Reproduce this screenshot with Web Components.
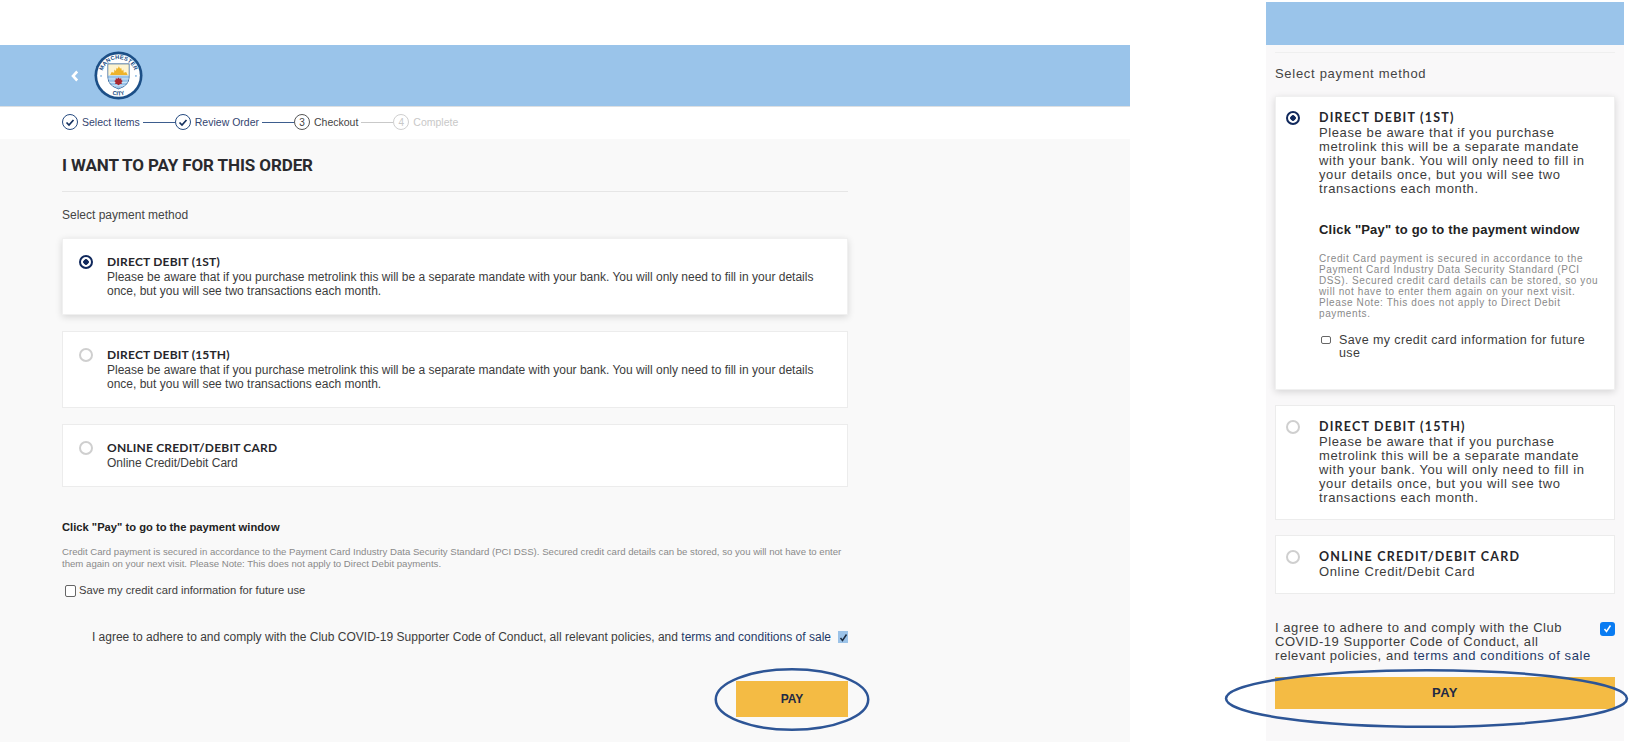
<!DOCTYPE html>
<html lang="en">
<head>
<meta charset="utf-8">
<title>Pay for this order</title>
<style>
  html, body { margin: 0; height: 742px; overflow: hidden; background: #fff; }
  body { display: flex; align-items: flex-start; font-family: "Liberation Sans", Arial, sans-serif; color: #3a3a3a; }
  .pane h1 {
    margin: 0;
    padding: 17px 0 17px;
    border-bottom: 1px solid #e6e6e6;
    font: 700 17px/18px Roboto, sans-serif;
    letter-spacing: -.1px;
    color: #2a2a2e;
  }
  .pane .select { margin: 0; padding: 16px 0; font-size: 12px; line-height: 14px; color: #444; }
  mobile-view .pane .select {
    margin-top: 6px;
    padding: 14px 0 15px;
    border-top: 1px solid #efefef;
    font-size: 13px;
    letter-spacing: .7px;
  }
</style>
</head>
<body>
<desktop-view>
  <site-header></site-header>
  <step-bar>
    <step-item state="done" label="Select Items"></step-item>
    <step-item state="done" label="Review Order"></step-item>
    <step-item state="current" num="3" label="Checkout"></step-item>
    <step-item state="todo" num="4" label="Complete" last></step-item>
  </step-bar>
  <div class="pane">
    <h1>I WANT TO PAY FOR THIS ORDER</h1>
    <p class="select">Select payment method</p>
    <payment-option checked heading="DIRECT DEBIT (1ST)">Please be aware that if you purchase metrolink this will be a separate mandate with your bank. You will only need to fill in your details once, but you will see two transactions each month.</payment-option>
    <payment-option heading="DIRECT DEBIT (15TH)">Please be aware that if you purchase metrolink this will be a separate mandate with your bank. You will only need to fill in your details once, but you will see two transactions each month.</payment-option>
    <payment-option heading="ONLINE CREDIT/DEBIT CARD">Online Credit/Debit Card</payment-option>
    <card-notice></card-notice>
    <agree-row></agree-row>
    <pay-button></pay-button>
  </div>
</desktop-view>
<mobile-view>
  <div class="topbar"></div>
  <div class="pane">
    <p class="select">Select payment method</p>
    <payment-option checked heading="DIRECT DEBIT (1ST)">Please be aware that if you purchase metrolink this will be a separate mandate with your bank. You will only need to fill in your details once, but you will see two transactions each month.
      <card-notice slot="extra"></card-notice>
    </payment-option>
    <payment-option heading="DIRECT DEBIT (15TH)">Please be aware that if you purchase metrolink this will be a separate mandate with your bank. You will only need to fill in your details once, but you will see two transactions each month.</payment-option>
    <payment-option heading="ONLINE CREDIT/DEBIT CARD">Online Credit/Debit Card</payment-option>
    <agree-row></agree-row>
    <pay-button></pay-button>
  </div>
</mobile-view>

<script>
/**
 * Shortcut for a class with a shadow root made from a html string.
 *
 * @param {string} name - Tag name.
 * @param {string} html - Style and markup of the element.
 * @param {Function} [ready] - Called with the element once connected.
 */
function define (name, html, ready) {
  const template = document.createElement('template')
  template.innerHTML = html

  customElements.define(name, class extends HTMLElement {
    constructor () {
      super()
      this.attachShadow({ mode: 'open' })
        .appendChild(template.content.cloneNode(true))
    }

    connectedCallback () {
      if (ready) ready(this)
    }
  })
}

define('desktop-view', `
  <style>
    :host {
      display: block;
      width: 1130px;
      margin-top: 45px;
      height: 697px;
      --option-pad: 16px 20px 16px 16px;
      --option-gap: 16px;
      --option-title: 12px;
      --option-title-space: .2px;
      --option-size: 12px;
      --option-space: 0;
      --option-text-width: 720px;
      --option-text-gap: 14px;
      --notice-top: 17px;
      --notice-bottom: 0;
      --h2-size: 11.200px;
      --h2-space: 0;
      --h2-gap: 12px;
      --small-size: 9.620px;
      --small-space: 0;
      --small-line: 12px;
      --label-gap: 13px;
      --label-size: 11.200px;
      --label-space: 0;
      --label-line: 14px;
      --box-width: 9px;
      --box-height: 10px;
      --box-left: 3px;
      --box-right: 3px;
      --agree-top: 33px;
      --agree-size: 12px;
      --agree-space: .01px;
      --agree-justify: flex-end;
      --agree-text: auto;
      --check-width: 10px;
      --check-height: 12px;
      --check-bg: #9cc3e8;
      --check-ink: #1d2b3f;
      --check-radius: 0;
      --pay-width: 112px;
      --pay-height: 36px;
      --pay-top: 37px;
      --pay-size: 12px;
      --pay-space: 0;
      --ring-left: -21px;
      --ring-top: -13px;
      --ring-width: 154px;
      --ring-height: 63px;
    }
    ::slotted(.pane) {
      background: #f9f9f9;
      height: 603px;
      padding: 0 282px 0 62px;
      box-sizing: border-box;
    }
  </style>
  <slot></slot>
`)

define('mobile-view', `
  <style>
    :host {
      display: block;
      width: 358px;
      margin: 2px 0 0 136px;
      height: 740px;
      --option-pad: 14px 11px 14px 10px;
      --option-gap: 15px;
      --option-title: 12.500px;
      --option-title-space: 1.200px;
      --option-size: 13px;
      --option-space: .6px;
      --option-text-width: 283px;
      --option-text-gap: 19px;
      --notice-top: 26.500px;
      --notice-bottom: 14px;
      --h2-size: 13px;
      --h2-space: .2px;
      --h2-gap: 16px;
      --small-size: 10px;
      --small-space: .6px;
      --small-line: 11px;
      --label-gap: 15px;
      --label-size: 12.500px;
      --label-space: .4px;
      --label-line: 13.500px;
      --box-width: 8px;
      --box-height: 6px;
      --box-left: 2px;
      --box-right: 8px;
      --agree-top: 27px;
      --agree-size: 13px;
      --agree-space: .55px;
      --agree-justify: space-between;
      --agree-text: 316px;
      --check-width: 15px;
      --check-height: 14px;
      --check-bg: #0a7cf2;
      --check-ink: #fff;
      --check-radius: 3px;
      --pay-width: 340px;
      --pay-height: 32px;
      --pay-top: 14px;
      --pay-size: 13px;
      --pay-space: .4px;
      --ring-left: -51px;
      --ring-top: -8px;
      --ring-width: 405px;
      --ring-height: 59px;
    }
    ::slotted(.topbar) {
      background: #9ac4ea;
      height: 44px;
    }
    ::slotted(.pane) {
      background: #f9f8f9;
      height: 696px;
      padding: 1px 9px 0;
      margin-top: -1px;
      box-sizing: border-box;
    }
  </style>
  <slot></slot>
`)

define('site-header', `
  <style>
    :host {
      display: flex;
      align-items: center;
      gap: 15px;
      height: 62px;
      padding-left: 71px;
      background: #9ac4ea;
      border-bottom: 1px solid #dcdfe2;
      box-sizing: border-box;
    }
  </style>
  <svg width="8" height="12" viewBox="0 0 8 12"><path d="M6.200 1.500 2 6l4.200 4.500" fill="none" stroke="#fff" stroke-width="2.600"/></svg>
  <svg width="49" height="49" viewBox="0 0 50 50">
    <defs>
      <path id="arcTop" d="M8.200 25a16.800 16.800 0 0 1 33.600 0"/>
      <path id="arcBottom" d="M4.600 25a20.400 20.400 0 0 0 40.800 0"/>
      <clipPath id="shield"><path d="M14.500 13.500h21V27c0 6-5 9.500-10.500 11.500C19.500 36.500 14.500 33 14.500 27z"/></clipPath>
    </defs>
    <circle cx="25" cy="25" r="24.500" fill="#1c4f87"/>
    <circle cx="25" cy="25" r="21.800" fill="#fff"/>
    <text font-family="Liberation Sans" font-size="5.800" font-weight="700" fill="#1c4f87" letter-spacing=".2"><textPath href="#arcTop" startOffset="50%" text-anchor="middle">MANCHESTER</textPath></text>
    <text font-family="Liberation Sans" font-size="5.800" font-weight="700" fill="#1c4f87"><textPath href="#arcBottom" startOffset="50%" text-anchor="middle">CITY</textPath></text>
    <path d="M14.500 13.500h21V27c0 6-5 9.500-10.500 11.500C19.500 36.500 14.500 33 14.500 27z" fill="#fff" stroke="#1c4f87" stroke-width="1.400"/>
    <g clip-path="url(#shield)">
      <rect x="14" y="13" width="22" height="12.500" fill="#fdf3d0"/>
      <path d="M16.500 24.500l1.500-3 2.500.6.300-3.100 1.500 1.500.8-3.500 1.100 1 1.200-2.500 1.200 2.500 1.100-1 .8 3.500 1.500-1.500.3 3.100 2.500-.6 1.500 3z" fill="#eeb32a"/>
      <rect x="14" y="25" width="22" height="14" fill="#9ac4ea"/>
      <path d="M14 28.500h22M14 32h22M14 35.500h22" stroke="#d6e7f6" stroke-width="1"/>
    </g>
    <path d="M25 27l1.100 1.300 1.700-.4.100 1.800 1.400 1-1.200 1.300.3 1.700-1.700.1-1.700 1.100-1.700-1.100-1.700-.1.300-1.700-1.200-1.300 1.400-1 .1-1.800 1.700.4z" fill="#a8262e"/>
    <circle cx="7.200" cy="25.500" r=".9" fill="#7fb2de"/>
    <circle cx="42.800" cy="25.500" r=".9" fill="#7fb2de"/>
  </svg>
`)

define('step-bar', `
  <style>
    :host {
      display: flex;
      align-items: center;
      height: 30px;
      padding: 0 0 2px 62px;
      background: #fff;
    }
  </style>
  <slot></slot>
`)

define('step-item', `
  <style>
    :host {
      display: flex;
      align-items: center;
      font-size: 10.500px;
      color: #33456f;
      --ring: #254a80;
      --line: #3d5d8e;
    }
    :host([state="current"]) { color: #444; --ring: #555; --line: #c9c9c9; }
    :host([state="todo"]) { color: #c8c8c8; --ring: #cfcfcf; --line: transparent; }
    .ring {
      width: 14px;
      height: 14px;
      border: 1px solid var(--ring);
      border-radius: 50%;
      display: flex;
      align-items: center;
      justify-content: center;
      font-size: 10px;
      background: #fff;
    }
    .label { margin: 0 3px 0 4px; white-space: nowrap; }
    .line { width: 32px; height: 1px; background: var(--line); }
    svg { display: none; }
    :host([state="done"]) svg { display: block; }
    :host([last]) .line { display: none; }
  </style>
  <span class="ring"><svg width="10" height="9" viewBox="0 0 10 9"><path d="M1.500 4.500 4 7l4.500-5" fill="none" stroke="#14305e" stroke-width="1.700"/></svg><span id="num"></span></span>
  <span class="label" id="label"></span>
  <span class="line"></span>
`, el => {
  el.shadowRoot.querySelector('#label').textContent = el.getAttribute('label')
  el.shadowRoot.querySelector('#num').textContent = el.getAttribute('num') || ''
})

define('payment-option', `
  <style>
    :host {
      display: flex;
      padding: var(--option-pad);
      margin-bottom: var(--option-gap);
      background: #fff;
      border: 1px solid #ececec;
      box-sizing: border-box;
    }
    :host([checked]) {
      border-color: #f0f0f0;
      box-shadow: 0 2px 7px rgba(0, 0, 0, .14);
    }
    .radio {
      flex: none;
      width: 14px;
      height: 14px;
      border: 2px solid #cfcfcf;
      border-radius: 50%;
      box-sizing: border-box;
      background: #fff;
    }
    :host([checked]) .radio {
      border-color: #10285c;
      background: radial-gradient(circle, #10285c 0 2.500px, #fff 3px);
    }
    .text {
      flex: none;
      width: var(--option-text-width);
      margin-left: var(--option-text-gap);
      font-size: var(--option-size);
      letter-spacing: var(--option-space);
      line-height: 14px;
      color: #3c3c3c;
    }
    .title {
      margin-bottom: 1px;
      font-family: Lato, sans-serif;
      font-size: var(--option-title);
      font-weight: 700;
      letter-spacing: var(--option-title-space);
      color: #26262b;
    }
  </style>
  <span class="radio"></span>
  <div class="text">
    <div class="title" id="title"></div>
    <slot></slot>
    <slot name="extra"></slot>
  </div>
`, el => {
  el.shadowRoot.querySelector('#title').textContent = el.getAttribute('heading')
})

define('card-notice', `
  <style>
    :host { display: block; padding: var(--notice-top) 0 var(--notice-bottom); }
    h2 {
      margin: 0 0 var(--h2-gap);
      font-size: var(--h2-size);
      letter-spacing: var(--h2-space);
      line-height: 14px;
      color: #222;
    }
    p {
      margin: 0;
      font-size: var(--small-size);
      letter-spacing: var(--small-space);
      line-height: var(--small-line);
      color: #8a8a8a;
    }
    label {
      display: flex;
      align-items: flex-start;
      margin-top: var(--label-gap);
      font-size: var(--label-size);
      letter-spacing: var(--label-space);
      line-height: var(--label-line);
      color: #3c3c3c;
    }
    i {
      flex: none;
      width: var(--box-width);
      height: var(--box-height);
      margin: 2px var(--box-right) 0 var(--box-left);
      border: 1px solid #666;
      border-radius: 2px;
      background: #fff;
    }
  </style>
  <h2>Click "Pay" to go to the payment window</h2>
  <p>Credit Card payment is secured in accordance to the Payment Card Industry Data Security Standard (PCI DSS). Secured credit card details can be stored, so you will not have to enter them again on your next visit. Please Note: This does not apply to Direct Debit payments.</p>
  <label><i></i><span>Save my credit card information for future use</span></label>
`)

define('agree-row', `
  <style>
    :host {
      display: flex;
      justify-content: var(--agree-justify);
      gap: 7px;
      margin-top: var(--agree-top);
      font-size: var(--agree-size);
      letter-spacing: var(--agree-space);
      line-height: 14px;
      color: #3c3c3c;
    }
    span { width: var(--agree-text); }
    a { color: #1f3a68; text-decoration: none; }
    i {
      flex: none;
      width: var(--check-width);
      height: var(--check-height);
      margin-top: 1px;
      border-radius: var(--check-radius);
      background: var(--check-bg);
      display: flex;
      align-items: center;
      justify-content: center;
    }
    path { stroke: var(--check-ink); }
  </style>
  <span>I agree to adhere to and comply with the Club COVID-19 Supporter Code of Conduct, all relevant policies, and <a>terms and conditions of sale</a></span>
  <i><svg width="9" height="9" viewBox="0 0 9 9"><path d="M1.500 5 3.500 7.500 7.500 1.500" fill="none" stroke-width="1.500"/></svg></i>
`)

define('pay-button', `
  <style>
    :host {
      position: relative;
      display: flex;
      align-items: center;
      justify-content: center;
      width: var(--pay-width);
      height: var(--pay-height);
      margin: var(--pay-top) 0 0 auto;
      background: #f4bb44;
      font-size: var(--pay-size);
      letter-spacing: var(--pay-space);
      font-weight: 700;
      color: #1f2a44;
    }
    svg {
      position: absolute;
      left: var(--ring-left);
      top: var(--ring-top);
      width: var(--ring-width);
      height: var(--ring-height);
      overflow: visible;
    }
    ellipse { vector-effect: non-scaling-stroke; }
  </style>
  PAY
  <svg viewBox="0 0 100 100" preserveAspectRatio="none"><ellipse cx="50" cy="50" rx="49.500" ry="48" fill="none" stroke="#2d5596" stroke-width="2.500"/></svg>
`)
</script>
</body>
</html>
